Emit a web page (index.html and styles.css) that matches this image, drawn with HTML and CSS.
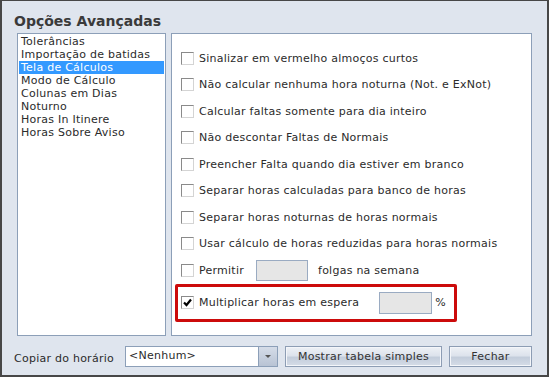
FILE: index.html
```html
<!DOCTYPE html>
<html lang="pt">
<head>
  <meta charset="UTF-8">
  <title>Opções Avançadas</title>
  <link rel="stylesheet" href="styles.css">
</head>
<body>
  <div class="window">
    <h1 class="title">Opções Avançadas</h1>

    <div class="content">
      <ul class="menu-list">
        <li>Tolerâncias</li>
        <li>Importação de batidas</li>
        <li class="selected">Tela de Cálculos</li>
        <li>Modo de Cálculo</li>
        <li>Colunas em Dias</li>
        <li>Noturno</li>
        <li>Horas In Itinere</li>
        <li>Horas Sobre Aviso</li>
      </ul>

      <div class="options">
        <div class="option"><span class="check"></span>Sinalizar em vermelho almoços curtos</div>
        <div class="option"><span class="check"></span>Não calcular nenhuma hora noturna (Not. e ExNot)</div>
        <div class="option"><span class="check"></span>Calcular faltas somente para dia inteiro</div>
        <div class="option"><span class="check"></span>Não descontar Faltas de Normais</div>
        <div class="option"><span class="check"></span>Preencher Falta quando dia estiver em branco</div>
        <div class="option"><span class="check"></span>Separar horas calculadas para banco de horas</div>
        <div class="option"><span class="check"></span>Separar horas noturnas de horas normais</div>
        <div class="option"><span class="check"></span>Usar cálculo de horas reduzidas para horas normais</div>
        <div class="option">
          <span class="check"></span>Permitir
          <span class="field field-folgas"></span>
          folgas na semana
        </div>
        <div class="option highlighted">
          <span class="check checked">
            <svg width="9" height="9" viewBox="0 0 9 9"><path d="M1 4.5 L3.5 7 L8 1.5" fill="none" stroke="#000" stroke-width="2.2"/></svg>
          </span>Multiplicar horas em espera
          <span class="field field-percent"></span>
          %
        </div>
      </div>
    </div>

    <div class="bottom-bar">
      <label>Copiar do horário</label>
      <div class="combo">
        <span class="combo-value">&lt;Nenhum&gt;</span>
        <span class="combo-arrow"></span>
      </div>
      <button class="btn btn-wide">Mostrar tabela simples</button>
      <button class="btn btn-close">Fechar</button>
    </div>
  </div>
</body>
</html>
```

FILE: styles.css
```css
:root {
  --window-bg: #dfe5ee;
  --border-color: #8c9fb8;
  --text-color: #2b2b2b;
  --select-color: #3399ff;
}

body {
  margin: 0;
  padding: 0;
  font-family: "DejaVu Sans", Verdana, sans-serif;
  font-size: 11px;
  letter-spacing: 0.25px;
  color: var(--text-color);
}

.window {
  width: 549px;
  height: 377px;
  box-sizing: border-box;
  background: var(--window-bg);
  border: 2px solid #474747;
  border-top-width: 1px;
  padding: 0 0 0 15px;
}

.title {
  margin: 0;
  padding: 12px 0 0 0;
  margin-left: -3px;
  height: 20px;
  font-size: 14px;
  font-weight: bold;
  letter-spacing: 0;
  color: #3a3a3a;
}

.content {
  display: flex;
  gap: 5px;
  height: 303px;
}

.menu-list {
  list-style: none;
  margin: 0;
  padding: 1px 1px 0 1px;
  width: 149px;
  box-sizing: border-box;
  background: white;
  border: 1px solid var(--border-color);
}

.menu-list li {
  height: 13px;
  line-height: 13px;
  padding-left: 2px;
  white-space: nowrap;
}

.menu-list li.selected {
  background: var(--select-color);
  color: white;
}

.options {
  width: 361px;
  box-sizing: border-box;
  background: white;
  border: 1px solid var(--border-color);
  padding: 11px 0 0 9px;
}

.option {
  display: flex;
  align-items: center;
  height: 26.5px;
  white-space: nowrap;
}

.check {
  width: 11px;
  height: 11px;
  border: 1px solid #8a8a8a;
  border-right-color: #d4d4d4;
  border-bottom-color: #d4d4d4;
  background: white;
  margin-right: 5px;
  display: flex;
  align-items: center;
  justify-content: center;
}

.field {
  display: inline-block;
  height: 19px;
  background: #e6e6e6;
  border: 1px solid #9aabc2;
}

.field-folgas {
  width: 50px;
  margin: 0 10px 0 12px;
}

.field-percent {
  width: 51px;
  margin: 0 3px 0 20px;
  height: 20px;
}

.highlighted {
  margin: 0 0 0 -6px;
  padding-left: 3px;
  width: 273px;
  height: 32px;
  border: 3px solid #cc0b0b;
  border-radius: 2px;
}

.bottom-bar {
  display: flex;
  align-items: center;
  margin-top: 10px;
  height: 21px;
}

.bottom-bar label {
  width: 111px;
  flex-shrink: 0;
  white-space: nowrap;
  margin: 4px 0 0 -3px;
}

.combo {
  display: flex;
  width: 153px;
  height: 21px;
  box-sizing: border-box;
  border: 1px solid var(--border-color);
  background: white;
}

.combo-value {
  flex: 1;
  padding: 2px 0 0 3px;
}

.combo-arrow {
  width: 18px;
  background: linear-gradient(#d5dce8, #b8c3d4);
  border-left: 1px solid var(--border-color);
  position: relative;
}

.combo-arrow::after {
  content: "";
  position: absolute;
  left: 6px;
  top: 8px;
  border-left: 3px solid transparent;
  border-right: 3px solid transparent;
  border-top: 3px solid #555;
}

.btn {
  height: 21px;
  box-sizing: border-box;
  border: 1px solid #8d9db4;
  background: linear-gradient(#eef1f6 0%, #dde3ec 45%, #c3cddb 55%, #d5dce7 100%);
  font-family: "DejaVu Sans", Verdana, sans-serif;
  font-size: 11px;
  letter-spacing: 0.25px;
  color: #333;
  padding: 0;
  box-shadow: inset 0 0 0 1px #f4f6fa;
}

.btn-wide {
  width: 157px;
  margin-left: 7px;
}

.btn-close {
  width: 83px;
  margin-left: 7px;
}
```
